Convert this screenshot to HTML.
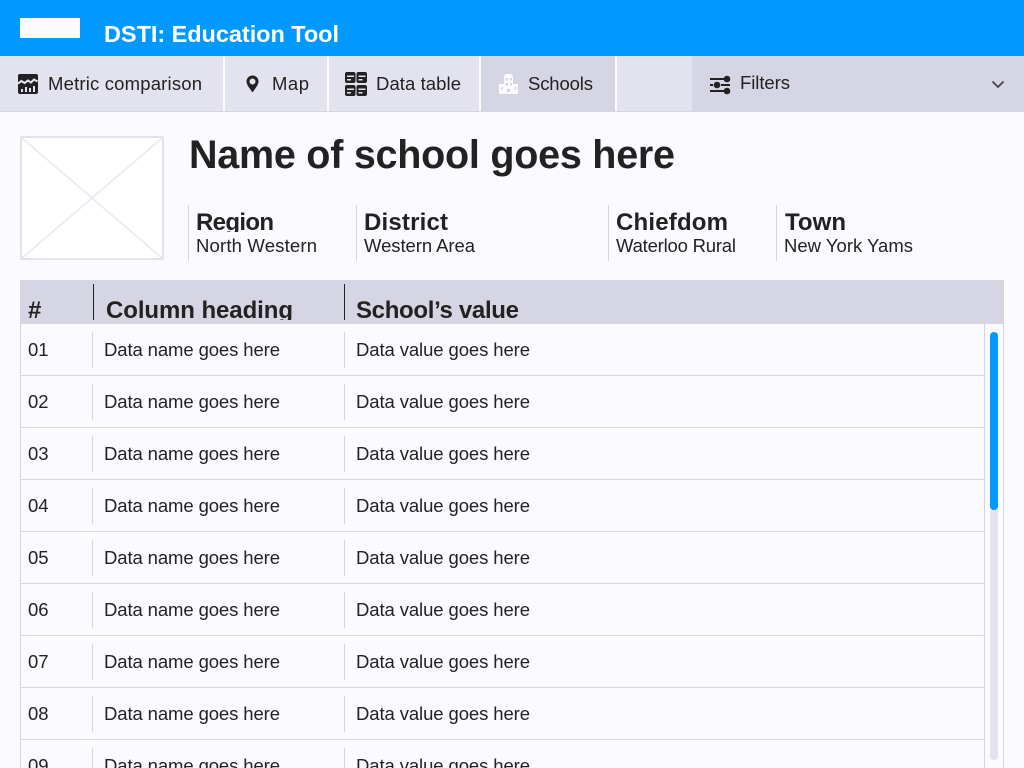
<!DOCTYPE html>
<html lang="en">
<head>
<meta charset="utf-8">
<title>DSTI: Education Tool</title>
<style>
html,body{margin:0;padding:0;width:1024px;height:768px;overflow:hidden;background:#fbfaff}
svg{display:block}
text{font-family:"Liberation Sans",sans-serif;fill:#222;font-size:18.500px}
.b{font-weight:bold;font-size:24px}
.w{fill:#fff;font-weight:bold;font-size:23.500px}
.h{font-weight:bold;font-size:39.500px}
.s{stroke:#d5d5e3;stroke-width:1}
</style>
</head>
<body>
<svg width="1024" height="768" viewBox="0 0 1024 768" xmlns="http://www.w3.org/2000/svg">
<defs>
<clipPath id="c1"><rect x="0" y="200" width="1024" height="32"/></clipPath>
<clipPath id="c2"><rect x="0" y="290" width="1024" height="30"/></clipPath>
</defs>
<rect width="1024" height="768" fill="#fbfaff"/>

<!-- header -->
<rect width="1024" height="56" fill="#0099ff"/>
<rect x="20" y="18" width="60" height="20" fill="#fbfaff"/>
<text class="w" x="104" y="42" textLength="235" lengthAdjust="spacing">DSTI: Education Tool</text>

<!-- nav -->
<rect y="56" width="1024" height="55" fill="#e3e3ef"/>
<rect y="111" width="1024" height="1" fill="#d5d5e3"/>
<rect x="481" y="56" width="134" height="55" fill="#d5d5e3"/>
<rect x="692" y="56" width="332" height="56" fill="#d5d5e3"/>
<g fill="#fbfaff">
<rect x="223" y="56" width="2" height="55"/>
<rect x="327" y="56" width="2" height="55"/>
<rect x="479" y="56" width="2" height="55"/>
<rect x="615" y="56" width="2" height="55"/>
</g>
<text x="48" y="90" textLength="154" lengthAdjust="spacing">Metric comparison</text>
<text x="272" y="90" textLength="37" lengthAdjust="spacing">Map</text>
<text x="376" y="90" textLength="85" lengthAdjust="spacing">Data table</text>
<text x="528" y="90" textLength="65" lengthAdjust="spacing">Schools</text>
<text x="740" y="89" textLength="50" lengthAdjust="spacing">Filters</text>

<!-- chart icon -->
<rect x="18" y="74" width="20" height="20" rx="2" fill="#222"/>
<path d="M18 83.500l3.500-2.500 3 2 3.500-2.500 3 2 3-3 3.500 2" fill="none" stroke="#e3e3ef" stroke-width="2"/>
<g fill="#e3e3ef">
<rect x="21" y="89" width="2" height="3"/>
<rect x="25" y="87" width="2" height="5"/>
<rect x="29" y="88" width="2" height="4"/>
<rect x="33" y="86" width="2" height="6"/>
</g>
<!-- pin -->
<path fill-rule="evenodd" d="M252.500 75.500a6 6 0 0 1 6 6c0 3.600-3.700 7.400-6 11c-2.300-3.600-6-7.400-6-11a6 6 0 0 1 6-6zm0 3a3 3 0 1 0 0 6a3 3 0 0 0 0-6z" fill="#222"/>
<!-- table icon -->
<g fill="#222">
<rect x="345" y="72" width="10.500" height="11" rx="2"/>
<rect x="356.500" y="72" width="10.500" height="11" rx="2"/>
<rect x="345" y="85" width="10.500" height="11" rx="2"/>
<rect x="356.500" y="85" width="10.500" height="11" rx="2"/>
</g>
<g fill="#e3e3ef">
<rect x="347" y="75.500" width="7" height="1.500"/><rect x="347" y="79" width="4" height="1.500"/>
<rect x="358.500" y="75.500" width="7" height="1.500"/><rect x="358.500" y="79" width="4" height="1.500"/>
<rect x="347" y="88.500" width="7" height="1.500"/><rect x="347" y="92" width="4" height="1.500"/>
<rect x="358.500" y="88.500" width="7" height="1.500"/><rect x="358.500" y="92" width="4" height="1.500"/>
</g>
<!-- school icon -->
<path fill="#fbfaff" fill-rule="evenodd" d="M504 76l2-2h5l2 2v8h5v10h-19v-10h5zM505.500 78v2.500h2.500v-2.500zM510 78v2.500h2v-2.500zM505.500 83v2.500h2.500v-2.500zM510 83v2.500h2v-2.500zM501 87v2.500h2v-2.500zM514.500 87v2.500h2v-2.500zM507 89v3h3v-3z"/>
<!-- filter icon -->
<g fill="#222">
<rect x="710" y="78" width="14" height="2"/>
<circle cx="727" cy="79" r="3.300"/>
<rect x="710" y="84" width="3" height="2"/>
<circle cx="717" cy="85" r="3.300"/>
<rect x="721" y="84" width="9" height="2"/>
<rect x="710" y="90" width="14" height="2"/>
<circle cx="727" cy="91" r="3.300"/>
</g>
<!-- chevron -->
<path d="M992.500 81.500l5.500 5.500 5.500-5.500" fill="none" stroke="#444" stroke-width="1.800"/>

<!-- image placeholder -->
<rect x="21" y="137" width="142" height="122" fill="#fff" stroke="#e3e3ef" stroke-width="2"/>
<path d="M22 138l140 120M162 138l-140 120" stroke="#e8e8f3" stroke-width="1.500"/>

<!-- title -->
<text class="h" x="189" y="168" textLength="486" lengthAdjust="spacing">Name of school goes here</text>

<!-- meta -->
<g class="s">
<line x1="188.500" y1="205" x2="188.500" y2="261"/>
<line x1="356.500" y1="205" x2="356.500" y2="261"/>
<line x1="608.500" y1="205" x2="608.500" y2="261"/>
<line x1="776.500" y1="205" x2="776.500" y2="261"/>
</g>
<g clip-path="url(#c1)">
<text class="b" x="196" y="230" textLength="78" lengthAdjust="spacing">Region</text>
<text class="b" x="364" y="230" textLength="84" lengthAdjust="spacing">District</text>
<text class="b" x="616" y="230" textLength="112" lengthAdjust="spacing">Chiefdom</text>
<text class="b" x="785" y="230" textLength="61" lengthAdjust="spacing">Town</text>
</g>
<text x="196" y="252" textLength="121" lengthAdjust="spacing">North Western</text>
<text x="364" y="252" textLength="111" lengthAdjust="spacing">Western Area</text>
<text x="616" y="252" textLength="120" lengthAdjust="spacing">Waterloo Rural</text>
<text x="784" y="252" textLength="129" lengthAdjust="spacing">New York Yams</text>

<!-- table head -->
<rect x="20" y="280" width="984" height="44" fill="#d5d5e3"/>
<rect x="93" y="284" width="1" height="36" fill="#222"/>
<rect x="344" y="284" width="1" height="36" fill="#222"/>
<g clip-path="url(#c2)">
<text class="b" x="28" y="318">#</text>
<text class="b" x="106" y="318" textLength="187" lengthAdjust="spacing">Column heading</text>
<text class="b" x="356" y="318" textLength="163" lengthAdjust="spacing">School’s value</text>
</g>

<!-- table frame -->
<g fill="#d5d5e3">
<rect x="20" y="324" width="1" height="444"/>
<rect x="984" y="324" width="1" height="444"/>
<rect x="1003" y="324" width="1" height="444"/>
<rect x="21" y="375" width="963" height="1"/>
<rect x="21" y="427" width="963" height="1"/>
<rect x="21" y="479" width="963" height="1"/>
<rect x="21" y="531" width="963" height="1"/>
<rect x="21" y="583" width="963" height="1"/>
<rect x="21" y="635" width="963" height="1"/>
<rect x="21" y="687" width="963" height="1"/>
<rect x="21" y="739" width="963" height="1"/>
<rect x="92" y="332" width="1" height="36"/><rect x="344" y="332" width="1" height="36"/>
<rect x="92" y="384" width="1" height="36"/><rect x="344" y="384" width="1" height="36"/>
<rect x="92" y="436" width="1" height="36"/><rect x="344" y="436" width="1" height="36"/>
<rect x="92" y="488" width="1" height="36"/><rect x="344" y="488" width="1" height="36"/>
<rect x="92" y="540" width="1" height="36"/><rect x="344" y="540" width="1" height="36"/>
<rect x="92" y="592" width="1" height="36"/><rect x="344" y="592" width="1" height="36"/>
<rect x="92" y="644" width="1" height="36"/><rect x="344" y="644" width="1" height="36"/>
<rect x="92" y="696" width="1" height="36"/><rect x="344" y="696" width="1" height="36"/>
<rect x="92" y="748" width="1" height="20"/><rect x="344" y="748" width="1" height="20"/>
</g>

<!-- scrollbar -->
<rect x="990" y="332" width="8" height="428" rx="4" fill="#e3e3ef"/>
<rect x="990" y="332" width="8" height="178" rx="4" fill="#0099ff"/>

<!-- rows -->
<text x="28" y="356">01</text><text x="104" y="356" textLength="176" lengthAdjust="spacing">Data name goes here</text><text x="356" y="356" textLength="174" lengthAdjust="spacing">Data value goes here</text>
<text x="28" y="408">02</text><text x="104" y="408" textLength="176" lengthAdjust="spacing">Data name goes here</text><text x="356" y="408" textLength="174" lengthAdjust="spacing">Data value goes here</text>
<text x="28" y="460">03</text><text x="104" y="460" textLength="176" lengthAdjust="spacing">Data name goes here</text><text x="356" y="460" textLength="174" lengthAdjust="spacing">Data value goes here</text>
<text x="28" y="512">04</text><text x="104" y="512" textLength="176" lengthAdjust="spacing">Data name goes here</text><text x="356" y="512" textLength="174" lengthAdjust="spacing">Data value goes here</text>
<text x="28" y="564">05</text><text x="104" y="564" textLength="176" lengthAdjust="spacing">Data name goes here</text><text x="356" y="564" textLength="174" lengthAdjust="spacing">Data value goes here</text>
<text x="28" y="616">06</text><text x="104" y="616" textLength="176" lengthAdjust="spacing">Data name goes here</text><text x="356" y="616" textLength="174" lengthAdjust="spacing">Data value goes here</text>
<text x="28" y="668">07</text><text x="104" y="668" textLength="176" lengthAdjust="spacing">Data name goes here</text><text x="356" y="668" textLength="174" lengthAdjust="spacing">Data value goes here</text>
<text x="28" y="720">08</text><text x="104" y="720" textLength="176" lengthAdjust="spacing">Data name goes here</text><text x="356" y="720" textLength="174" lengthAdjust="spacing">Data value goes here</text>
<text x="28" y="772">09</text><text x="104" y="772" textLength="176" lengthAdjust="spacing">Data name goes here</text><text x="356" y="772" textLength="174" lengthAdjust="spacing">Data value goes here</text>
</svg>
</body>
</html>
